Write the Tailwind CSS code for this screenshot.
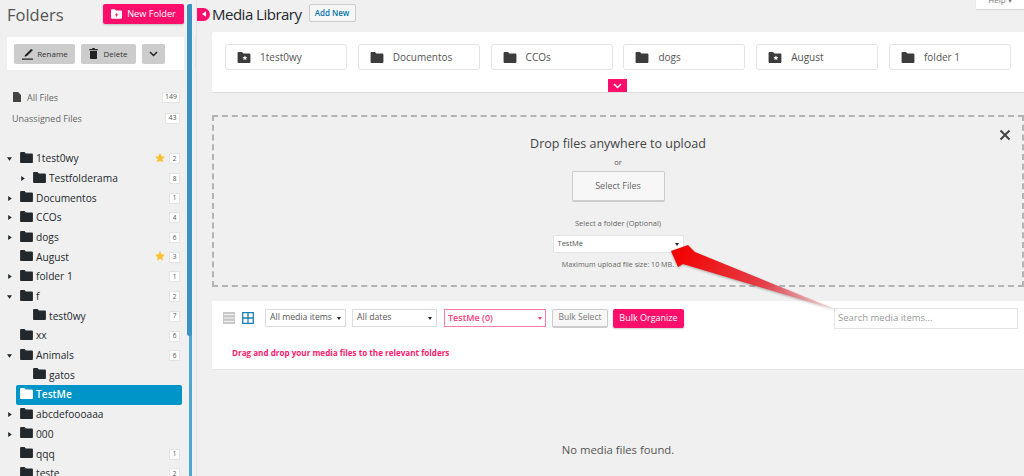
<!DOCTYPE html>
<html lang="en">
<head>
    <meta charset="UTF-8">
    <title>Media Library</title>
    <script src="https://cdn.jsdelivr.net/npm/@tailwindcss/browser@4"></script>
</head>
<body class="w-screen h-screen overflow-hidden bg-[#f0f0f0] text-[#444] font-['Open_Sans',sans-serif] antialiased">
    <svg class="hidden">
        <symbol id="folder" viewBox="0 0 14 12"><path d="M0 1.200C0 .5.500 0 1.200 0h3.600l1.500 1.600h6.400c.7 0 1.300.5 1.300 1.200v8c0 .7-.6 1.200-1.300 1.200H1.200C.5 12 0 11.500 0 10.800z" fill="currentColor"/></symbol>
        <symbol id="folder-star" viewBox="0 0 14 12"><path d="M0 1.200C0 .5.500 0 1.200 0h3.600l1.500 1.600h6.400c.7 0 1.300.5 1.300 1.200v8c0 .7-.6 1.200-1.300 1.200H1.200C.5 12 0 11.500 0 10.800z" fill="currentColor"/><path d="M8 3.800l.8 1.700 1.800.2-1.300 1.300.3 1.800L8 8l-1.600.8.3-1.800-1.300-1.300 1.800-.2z" fill="#fff"/></symbol>
        <symbol id="right" viewBox="0 0 5 7"><path d="M0 0l5 3.500L0 7z" fill="currentColor"/></symbol>
        <symbol id="down" viewBox="0 0 7 5"><path d="M0 0h7L3.500 5z" fill="currentColor"/></symbol>
        <symbol id="star" viewBox="0 0 12 12"><path d="M6 0l1.800 3.900 4.200.5-3.100 2.900.8 4.200L6 9.400 2.300 11.500l.8-4.200L0 4.400l4.200-.5z" fill="#fdc02f"/></symbol>
    </svg>

    <div class="flex w-full h-full">
        <!-- folder sidebar -->
        <aside class="w-[187px] shrink-0 h-full overflow-hidden">
            <div class="flex items-start justify-between h-[37px] pl-[7px] pr-[3px] pt-[4px]">
                <h2 class="text-[16.500px] text-[#555] leading-[22px]">Folders</h2>
                <button class="flex items-center justify-center gap-[5px] w-[81px] h-[20px] rounded-[2px] bg-[#ff0f6b] text-white text-[9.200px] shadow-[0_1px_2px_#0003]">
                    <svg class="w-[11px] h-[10px]" viewBox="0 0 14 12"><path d="M0 1.200C0 .5.5 0 1.200 0h3.600l1.500 1.600h6.400c.7 0 1.300.5 1.300 1.200v8c0 .7-.6 1.200-1.300 1.200H1.200C.5 12 0 11.500 0 10.800z" fill="#fff"/><path d="M6.500 5h1.200v1.500h1.500v1.200H7.700v1.500H6.500V7.700H5V6.500h1.500z" fill="#ff0f6b"/></svg>
                    New Folder
                </button>
            </div>
            <div class="flex items-center gap-[6px] ml-[7px] mr-[3px] h-[33px] px-[7px] bg-white">
                <button class="flex items-center justify-center gap-[3px] w-[61px] h-[20px] rounded-[2px] bg-[#ccc] text-[#333] text-[8px]">
                    <svg class="w-[13px] h-[13px]" viewBox="0 0 13 13"><path d="M4 8l6-6 2 1-6 6-2.500.8zM1 11.500h11v1.300H1z" fill="#222"/></svg>
                    Rename
                </button>
                <button class="flex items-center justify-center gap-[5px] w-[55px] h-[20px] rounded-[2px] bg-[#ccc] text-[#333] text-[8px]">
                    <svg class="w-[9px] h-[11px]" viewBox="0 0 9 11"><path d="M1 3h7v7.200c0 .5-.3.8-.8.8H1.800c-.5 0-.8-.3-.8-.8zM.3 1h2.700l.5-1h2l.5 1h2.700v1.200H.3z" fill="#222"/></svg>
                    Delete
                </button>
                <button class="flex items-center justify-center w-[23px] h-[20px] rounded-[2px] bg-[#ccc]">
                    <svg class="w-[9px] h-[6px]" viewBox="0 0 9 6"><path d="M1 1l3.500 3.500L8 1" fill="none" stroke="#222" stroke-width="1.500"/></svg>
                </button>
            </div>

            <div class="flex items-center h-[21px] mt-[17px] pl-[13px] pr-[7px] text-[9px] text-[#666]">
                <svg class="w-[8px] h-[10px] mr-[6px] -mt-[2px]" viewBox="0 0 8 10"><path d="M0 0h5l3 3v7H0z" fill="#444"/></svg>
                <span class="flex-1">All Files</span>
                <span class="flex items-center justify-center w-[18px] h-[11px] bg-white border border-[#e4e4e4] rounded-[1px] text-[7px] text-[#555]">149</span>
            </div>
            <div class="flex items-center h-[21px] pl-[12px] pr-[7px] text-[9px] text-[#666]">
                <span class="flex-1">Unassigned Files</span>
                <span class="flex items-center justify-center w-[15px] h-[11px] bg-white border border-[#e4e4e4] rounded-[1px] text-[7px] text-[#555]">43</span>
            </div>

            <!-- tree -->
            <div class="mt-[20px] text-[10.200px] text-[#23282d] [&>div]:flex [&>div]:items-center [&>div]:h-[19.700px] [&>div]:pr-[7px]">
                <div><span class="w-[20px] pl-[7px]"><svg class="w-[5px] h-[4px]"><use href="#down"/></svg></span><svg class="w-[13px] h-[11px] -mt-[3px] mr-[3px]"><use href="#folder"/></svg><span class="flex-1">1test0wy</span><svg class="w-[10px] h-[10px] mr-[4px] -mt-[2px]"><use href="#star"/></svg><span class="flex items-center justify-center w-[11px] h-[11px] bg-white border border-[#e4e4e4] text-[6.500px] text-[#555]">2</span></div>
                <div class="pl-[13px]"><span class="w-[20px] pl-[8px]"><svg class="w-[4px] h-[5px]"><use href="#right"/></svg></span><svg class="w-[13px] h-[11px] -mt-[3px] mr-[3px]"><use href="#folder"/></svg><span class="flex-1">Testfolderama</span><span class="flex items-center justify-center w-[11px] h-[11px] bg-white border border-[#e4e4e4] text-[6.500px] text-[#555]">8</span></div>
                <div><span class="w-[20px] pl-[8px]"><svg class="w-[4px] h-[5px]"><use href="#right"/></svg></span><svg class="w-[13px] h-[11px] -mt-[3px] mr-[3px]"><use href="#folder"/></svg><span class="flex-1">Documentos</span><span class="flex items-center justify-center w-[11px] h-[11px] bg-white border border-[#e4e4e4] text-[6.500px] text-[#555]">1</span></div>
                <div><span class="w-[20px] pl-[8px]"><svg class="w-[4px] h-[5px]"><use href="#right"/></svg></span><svg class="w-[13px] h-[11px] -mt-[3px] mr-[3px]"><use href="#folder"/></svg><span class="flex-1">CCOs</span><span class="flex items-center justify-center w-[11px] h-[11px] bg-white border border-[#e4e4e4] text-[6.500px] text-[#555]">4</span></div>
                <div><span class="w-[20px] pl-[8px]"><svg class="w-[4px] h-[5px]"><use href="#right"/></svg></span><svg class="w-[13px] h-[11px] -mt-[3px] mr-[3px]"><use href="#folder"/></svg><span class="flex-1">dogs</span><span class="flex items-center justify-center w-[11px] h-[11px] bg-white border border-[#e4e4e4] text-[6.500px] text-[#555]">6</span></div>
                <div><span class="w-[20px]"></span><svg class="w-[13px] h-[11px] -mt-[3px] mr-[3px]"><use href="#folder"/></svg><span class="flex-1">August</span><svg class="w-[10px] h-[10px] mr-[4px] -mt-[2px]"><use href="#star"/></svg><span class="flex items-center justify-center w-[11px] h-[11px] bg-white border border-[#e4e4e4] text-[6.500px] text-[#555]">3</span></div>
                <div><span class="w-[20px] pl-[8px]"><svg class="w-[4px] h-[5px]"><use href="#right"/></svg></span><svg class="w-[13px] h-[11px] -mt-[3px] mr-[3px]"><use href="#folder"/></svg><span class="flex-1">folder 1</span><span class="flex items-center justify-center w-[11px] h-[11px] bg-white border border-[#e4e4e4] text-[6.500px] text-[#555]">1</span></div>
                <div><span class="w-[20px] pl-[7px]"><svg class="w-[5px] h-[4px]"><use href="#down"/></svg></span><svg class="w-[13px] h-[11px] -mt-[3px] mr-[3px]"><use href="#folder"/></svg><span class="flex-1">f</span><span class="flex items-center justify-center w-[11px] h-[11px] bg-white border border-[#e4e4e4] text-[6.500px] text-[#555]">2</span></div>
                <div class="pl-[13px]"><span class="w-[20px]"></span><svg class="w-[13px] h-[11px] -mt-[3px] mr-[3px]"><use href="#folder"/></svg><span class="flex-1">test0wy</span><span class="flex items-center justify-center w-[11px] h-[11px] bg-white border border-[#e4e4e4] text-[6.500px] text-[#555]">7</span></div>
                <div><span class="w-[20px]"></span><svg class="w-[13px] h-[11px] -mt-[3px] mr-[3px]"><use href="#folder"/></svg><span class="flex-1">xx</span><span class="flex items-center justify-center w-[11px] h-[11px] bg-white border border-[#e4e4e4] text-[6.500px] text-[#555]">6</span></div>
                <div><span class="w-[20px] pl-[7px]"><svg class="w-[5px] h-[4px]"><use href="#down"/></svg></span><svg class="w-[13px] h-[11px] -mt-[3px] mr-[3px]"><use href="#folder"/></svg><span class="flex-1">Animals</span><span class="flex items-center justify-center w-[11px] h-[11px] bg-white border border-[#e4e4e4] text-[6.500px] text-[#555]">6</span></div>
                <div class="pl-[13px]"><span class="w-[20px]"></span><svg class="w-[13px] h-[11px] -mt-[3px] mr-[3px]"><use href="#folder"/></svg><span class="flex-1">gatos</span></div>
                <div class="ml-[16px] mr-[5px] pr-0 rounded-[2px] bg-[#0095c8] text-white font-semibold"><span class="w-[4px]"></span><svg class="w-[13px] h-[11px] -mt-[3px] mr-[3px]"><use href="#folder"/></svg><span class="flex-1">TestMe</span></div>
                <div><span class="w-[20px] pl-[8px]"><svg class="w-[4px] h-[5px]"><use href="#right"/></svg></span><svg class="w-[13px] h-[11px] -mt-[3px] mr-[3px]"><use href="#folder"/></svg><span class="flex-1">abcdefoooaaa</span></div>
                <div><span class="w-[20px] pl-[8px]"><svg class="w-[4px] h-[5px]"><use href="#right"/></svg></span><svg class="w-[13px] h-[11px] -mt-[3px] mr-[3px]"><use href="#folder"/></svg><span class="flex-1">000</span></div>
                <div><span class="w-[20px]"></span><svg class="w-[13px] h-[11px] -mt-[3px] mr-[3px]"><use href="#folder"/></svg><span class="flex-1">qqq</span><span class="flex items-center justify-center w-[11px] h-[11px] bg-white border border-[#e4e4e4] text-[6.500px] text-[#555]">1</span></div>
                <div><span class="w-[20px]"></span><svg class="w-[13px] h-[11px] -mt-[3px] mr-[3px]"><use href="#folder"/></svg><span class="flex-1">teste</span><span class="flex items-center justify-center w-[11px] h-[11px] bg-white border border-[#e4e4e4] text-[6.500px] text-[#555]">2</span></div>
            </div>
        </aside>

        <!-- sidebar scrollbar -->
        <div class="relative w-[10px] shrink-0 h-full border-r border-[#e4e4e4]">
            <div class="absolute left-[2px] top-[4px] bottom-0 w-[3px] bg-[#4ea6cf]"></div>
            <div class="absolute left-0 top-[4px] w-[5px] h-[332px] rounded-full bg-[#3b93c2]"></div>
            <div class="absolute left-[8px] top-[36px] w-[2px] h-[34px] bg-[#e6e6e6]"></div>
        </div>

        <!-- main column -->
        <main class="relative flex-1 min-w-0">
            <div class="flex items-center h-[32px] pb-[4px]">
                <span class="flex items-center justify-center w-[13px] h-[13px] rounded-r-full bg-[#ff0f6b] mr-[2px]">
                    <svg class="w-[4px] h-[6px] rotate-180"><use href="#right" class="text-white"/></svg>
                </span>
                <h1 class="text-[15px] tracking-[-0.5px] text-[#23282d] leading-none">Media Library</h1>
                <a class="flex items-center justify-center w-[47px] h-[18px] ml-[7px] mb-[2px] border border-[#ccc] rounded-[2px] bg-[#f7f7f7] text-[#0073aa] text-[8px] font-semibold">Add New</a>
            </div>

            <section class="relative h-[61px] ml-[15px] bg-white border-b border-[#ddd] rounded-l-[2px] pt-[12px] pl-[13px]">
                <div class="flex gap-[10.800px] text-[10px] text-[#555] [&>div]:flex [&>div]:items-center [&>div]:w-[122px] [&>div]:h-[26px] [&>div]:pl-[11px] [&>div]:gap-[9px] [&>div]:border [&>div]:border-[#e4e4e4] [&>div]:rounded-[3px]">
                    <div><svg class="w-[14px] h-[11px] text-[#3c3c3c]"><use href="#folder-star"/></svg>1test0wy</div>
                    <div><svg class="w-[14px] h-[11px] text-[#3c3c3c]"><use href="#folder"/></svg>Documentos</div>
                    <div><svg class="w-[14px] h-[11px] text-[#3c3c3c]"><use href="#folder"/></svg>CCOs</div>
                    <div><svg class="w-[14px] h-[11px] text-[#3c3c3c]"><use href="#folder"/></svg>dogs</div>
                    <div><svg class="w-[14px] h-[11px] text-[#3c3c3c]"><use href="#folder-star"/></svg>August</div>
                    <div><svg class="w-[14px] h-[11px] text-[#3c3c3c]"><use href="#folder"/></svg>folder 1</div>
                </div>
                <span class="absolute left-[396px] bottom-0 flex items-center justify-center w-[19px] h-[13px] bg-[#ff0f6b]">
                    <svg class="w-[9px] h-[6px]" viewBox="0 0 9 6"><path d="M1 1l3.500 3.500L8 1" fill="none" stroke="#fff" stroke-width="1.500"/></svg>
                </span>
            </section>

            <section class="relative flex flex-col items-center h-[172px] ml-[15px] mt-[22px] border-2 border-dashed border-[#b4b4b4] pt-[17px]">
                <button class="absolute right-[11px] top-[12px] w-[12px] h-[12px]">
                    <svg viewBox="0 0 12 12"><path d="M1.500 1.500l9 9m0-9l-9 9" stroke="#444" stroke-width="2"/></svg>
                </button>
                <h3 class="text-[12.500px] leading-[20px] text-[#444]">Drop files anywhere to upload</h3>
                <p class="mt-[3px] text-[7.500px] leading-[10px] text-[#555]">or</p>
                <button class="w-[93px] h-[31px] mt-[4px] bg-[#f7f7f7] border border-[#ccc] border-b-2 rounded-[2px] text-[9px] text-[#666]">Select Files</button>
                <p class="mt-[16px] text-[7.500px] leading-[10px] text-[#666]">Select a folder (Optional)</p>
                <div class="flex items-center justify-between w-[131px] h-[18px] mt-[7px] pl-[4px] pr-[4px] bg-white border border-[#e4e4e4] text-[7.500px] text-[#555]">TestMe<svg class="w-[4px] h-[3px] text-[#222]"><use href="#down"/></svg></div>
                <p class="mt-[6px] text-[7.200px] leading-[10px] text-[#666]">Maximum upload file size: 10 MB.</p>
            </section>

            <section class="h-[69px] ml-[15px] mt-[14px] bg-white border-b border-[#e4e4e4]">
                <div class="flex items-center h-[34px] pl-[11px] pr-[6px]">
                    <svg class="w-[12px] h-[12px] mr-[7px]" viewBox="0 0 12 12"><rect width="12" height="12" fill="#c8c8c8"/><path d="M1 2.500h10M1 6h10M1 9.500h10" stroke="#f4f4f4"/></svg>
                    <svg class="w-[12px] h-[12px] mr-[11px]" viewBox="0 0 12 12"><path d="M.7.7h10.600v10.600H.7zM6 .7v10.600M.7 6h10.600" fill="none" stroke="#1f7fb4" stroke-width="1.300"/></svg>
                    <div class="flex items-center justify-between w-[81px] h-[18px] px-[4px] border border-[#ddd] text-[8.700px] text-[#555]">All media items<svg class="w-[4px] h-[3px] text-[#222]"><use href="#down"/></svg></div>
                    <div class="flex items-center justify-between w-[85px] h-[18px] ml-[6px] px-[4px] border border-[#ddd] text-[8.700px] text-[#555]">All dates<svg class="w-[4px] h-[3px] text-[#222]"><use href="#down"/></svg></div>
                    <div class="flex items-center justify-between w-[102px] h-[18px] ml-[7px] px-[3px] border border-[#ff7ba9] text-[9px] font-semibold text-[#ff3d80]">TestMe (0)<svg class="w-[4px] h-[3px] text-[#ff3d80]"><use href="#down"/></svg></div>
                    <button class="w-[56px] h-[19px] ml-[6px] bg-[#f7f7f7] border border-[#ccc] border-b-2 rounded-[2px] text-[8.500px] text-[#777]">Bulk Select</button>
                    <button class="w-[71px] h-[19px] ml-[5px] bg-[#ff0f6b] rounded-[2px] text-[9px] text-white shadow-[0_1px_2px_#0003]">Bulk Organize</button>
                    <div class="flex items-center w-[184px] h-[21px] ml-auto px-[3px] border border-[#e4e4e4] text-[9.500px] text-[#999]">Search media items...</div>
                </div>
                <p class="pl-[20px] pt-[12px] text-[8.100px] font-bold text-[#ff1a70]">Drag and drop your media files to the relevant folders</p>
            </section>

            <p class="mt-[72px] ml-[15px] text-center text-[11.300px] text-[#555]">No media files found.</p>

            <!-- help tab -->
            <div class="absolute right-0 top-[-9px] flex items-center justify-center w-[48px] h-[18px] bg-white shadow-[0_1px_1px_#0000001a] text-[8px] text-[#777]">Help ▾</div>

            <!-- annotation arrow drawn over the screenshot -->
            <svg class="absolute left-[-197px] top-0 pointer-events-none drop-shadow-[0_1px_1px_#0000004d]" width="1024" height="476">
                <defs>
                    <linearGradient id="arrow" gradientUnits="userSpaceOnUse" x1="675" y1="250" x2="840" y2="313">
                        <stop offset="0" stop-color="#f40000"/>
                        <stop offset="0.55" stop-color="#e2414a"/>
                        <stop offset="1" stop-color="#f6c9cf" stop-opacity="0.5"/>
                    </linearGradient>
                </defs>
                <path d="M671 251L688 245L695 252L840 311L683 264L678 267z" fill="url(#arrow)"/>
            </svg>
        </main>
    </div>
</body>
</html>
